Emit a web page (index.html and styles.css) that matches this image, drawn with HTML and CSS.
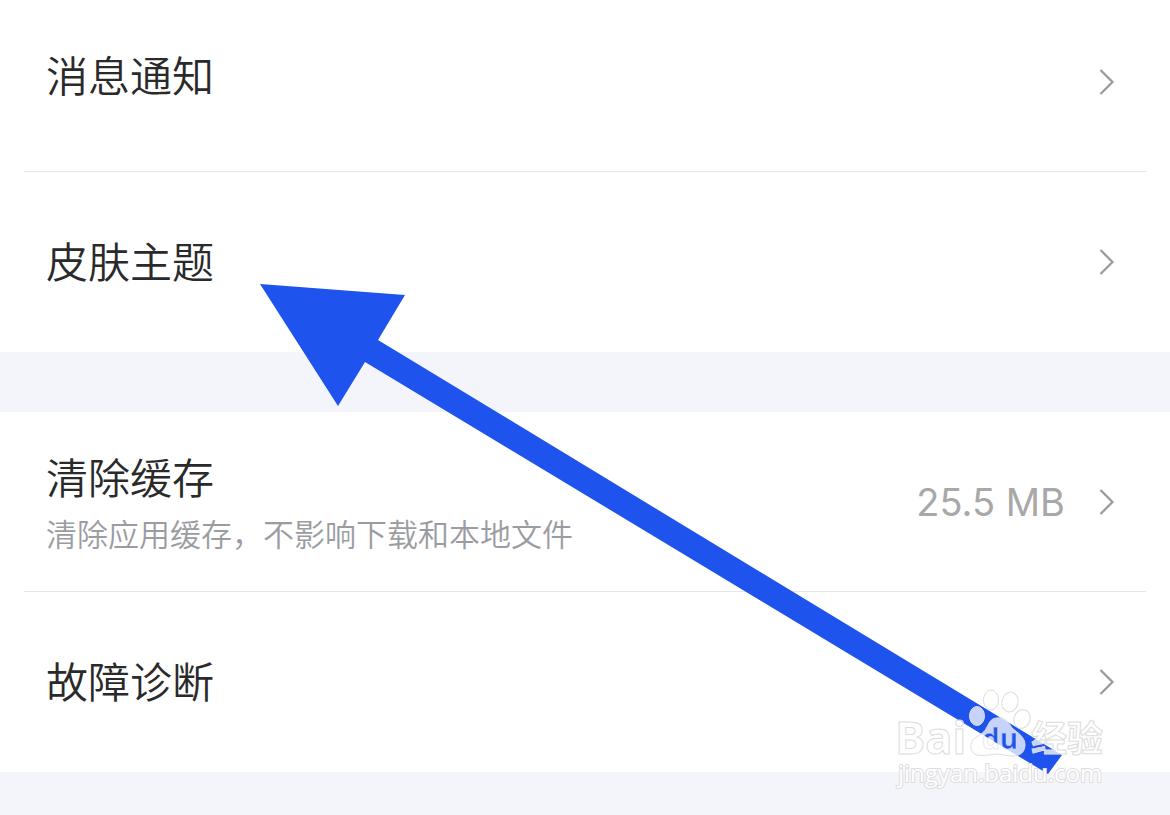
FILE: index.html
```html
<!DOCTYPE html>
<html lang="zh-CN">
<head>
    <meta charset="UTF-8">
    <meta name="viewport" content="width=device-width, initial-scale=1">
    <title>设置</title>
    <link rel="stylesheet" href="styles.css">
</head>
<body>
<!-- 箭头图标 -->
<svg class="defs" width="0" height="0" aria-hidden="true">
    <symbol id="chevron" viewBox="0 0 16 28">
        <path d="M1.5 2 L13.5 14 L1.5 26" fill="none" stroke="currentColor" stroke-width="2.2"/>
    </symbol>
</svg>
<main class="page">
    <ul class="group group-first">
        <li>
            <a class="row row-scrolled" href="#">
                <span class="title">消息通知</span>
                <svg class="chevron" aria-hidden="true"><use href="#chevron"/></svg>
            </a>
        </li>
        <li>
            <a class="row" href="#">
                <span class="title">皮肤主题</span>
                <svg class="chevron" aria-hidden="true"><use href="#chevron"/></svg>
            </a>
        </li>
    </ul>
    <ul class="group">
        <li>
            <a class="row" href="#">
                <span class="text">
                    <span class="title">清除缓存</span>
                    <span class="desc">清除应用缓存，不影响下载和本地文件</span>
                </span>
                <span class="value">25.5 MB</span>
                <svg class="chevron" aria-hidden="true"><use href="#chevron"/></svg>
            </a>
        </li>
        <li>
            <a class="row" href="#">
                <span class="title">故障诊断</span>
                <svg class="chevron" aria-hidden="true"><use href="#chevron"/></svg>
            </a>
        </li>
    </ul>

    <!-- 指向皮肤主题的箭头 -->
    <svg class="arrow" viewBox="0 0 1170 815" aria-hidden="true">
        <polygon points="260,284 405,295 378,340 1062,755 1048,774 365,362 338,406" fill="#1f53ee"/>
    </svg>

    <!-- 水印 -->
    <svg class="watermark" viewBox="0 0 220 110" role="img" aria-label="Baidu经验 jingyan.baidu.com">
        <mask id="du-mask">
            <rect width="220" height="110" fill="#fff" stroke="none"/>
            <text class="mark-du" x="92" y="64" fill="#000" stroke="none">du</text>
        </mask>
        <g class="mark">
            <text class="mark-logo" x="5" y="69">Bai</text>
            <g mask="url(#du-mask)">
                <ellipse cx="87" cy="31" rx="7.5" ry="9.5"/>
                <ellipse cx="101" cy="15" rx="7.5" ry="10"/>
                <ellipse cx="120" cy="17" rx="8" ry="10" transform="rotate(12 120 17)"/>
                <ellipse cx="132" cy="34" rx="8" ry="9.5" transform="rotate(20 132 34)"/>
                <path d="M107 33 C114 32 118 36 122 43 C128 48 135 52 135 60 C135 67 130 71 123 71 C115 71 112 69 106 69 C99 70 94 71 87 70 C79 67 79 58 85 53 C91 49 94 48 97 42 C100 36 102 33 107 33 Z"/>
            </g>
            <text class="mark-cn" x="141" y="67">经验</text>
            <text class="mark-url" x="8" y="97">jingyan.baidu.com</text>
        </g>
        <text class="mark-du mark-outline" x="92" y="64">du</text>
    </svg>
</main>
</body>
</html>
```
FILE: styles.css
```css
* {
    margin: 0;
    padding: 0;
    box-sizing: border-box;
}

body {
    background-color: #f4f5fa;
    color: #2a2a2a;
    font-family: "Noto Sans CJK SC", sans-serif;
}

ul {
    list-style: none;
}

.defs {
    position: absolute;
}

.page {
    position: relative;
    min-height: 100vh;
    overflow: hidden;
}

.group {
    background-color: #fff;
}

.group + .group {
    margin-top: 60px;
}

/*列表向上滚动了一点*/
.group-first {
    margin-top: -8px;
}

/*分割线*/
.group li:not(:last-child) {
    background: linear-gradient(#e6e6e6, #e6e6e6) center bottom / calc(100% - 48px) 1px no-repeat;
}

.row {
    display: flex;
    align-items: center;
    min-height: 180px;
    padding: 0 55px 0 46px;
    color: inherit;
    text-decoration: none;
}

.title {
    padding-bottom: 4px;
    font-size: 42px;
    font-weight: 350;
    line-height: 60px;
}

.row-scrolled .title {
    padding-bottom: 16px;
}

.text {
    display: flex;
    flex-direction: column;
    padding-bottom: 2px;
}

.desc {
    color: #9b9ca1;
    font-size: 31px;
    font-weight: 350;
    line-height: 46px;
}

.value {
    margin-left: auto;
    margin-right: 34px;
    color: #a8a8a8;
    font-family: Inter, sans-serif;
    font-size: 38px;
}

.chevron {
    flex: none;
    width: 16px;
    height: 28px;
    color: #999;
}

.title + .chevron {
    margin-left: auto;
}

.arrow {
    position: absolute;
    top: 0;
    left: 0;
    width: 100%;
    pointer-events: none;
}

.watermark {
    position: absolute;
    right: 60px;
    bottom: 20px;
    width: 220px;
    height: 110px;
    pointer-events: none;
}

.mark {
    fill: rgba(255, 255, 255, 0.75);
    stroke: #dcdcdc;
    stroke-width: 1px;
}

.mark-logo {
    font: bold 45px "Open Sans", sans-serif;
}

.mark-du {
    font: bold 28px "Open Sans", sans-serif;
}

.mark-outline {
    fill: none;
    stroke: rgba(215, 218, 228, 0.6);
    stroke-width: 1px;
}

.mark-cn {
    font: bold 36px "Noto Sans CJK SC", sans-serif;
}

/*先描边再填充，字的内部保持白色*/
.mark-url {
    font: 24px "Open Sans", sans-serif;
    fill: #fff;
    stroke-width: 2px;
    paint-order: stroke;
}
```
